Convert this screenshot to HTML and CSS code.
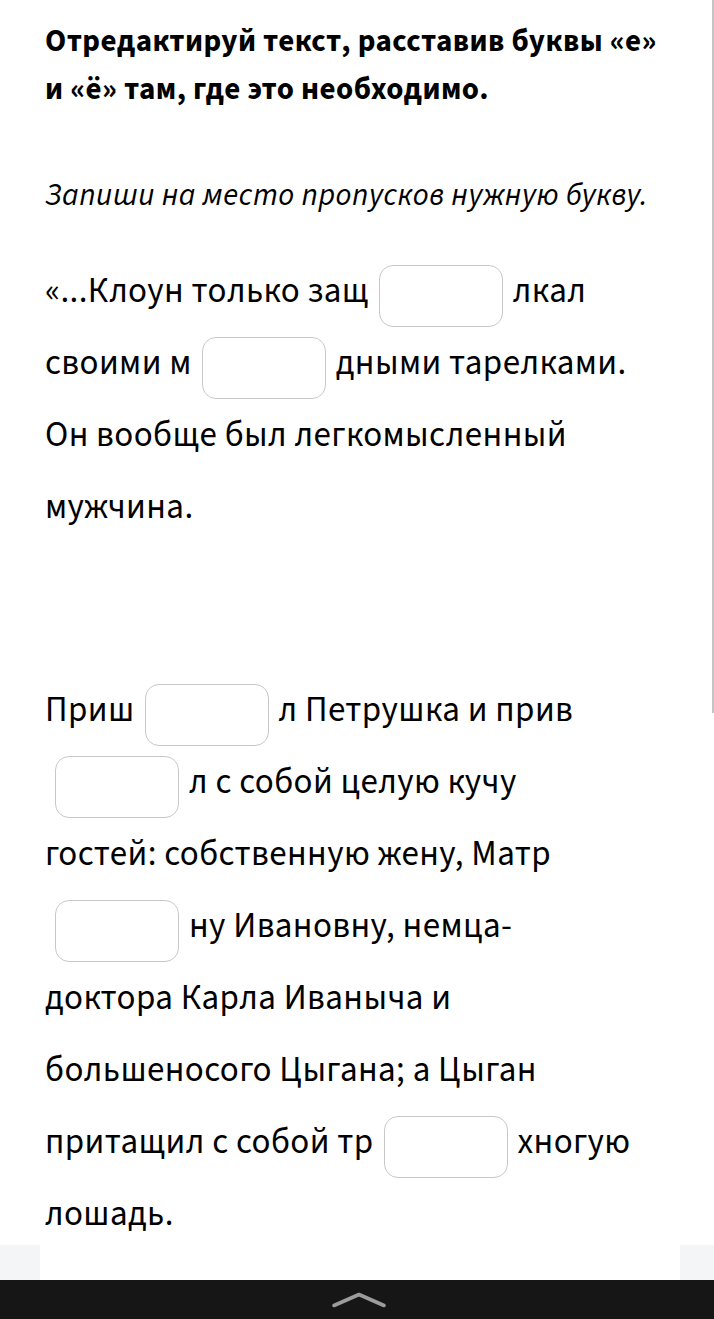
FILE: index.html
```html
<!DOCTYPE html>
<html lang="ru">
<head>
<meta charset="utf-8">
<title>Задание</title>
<link rel="stylesheet" href="styles.css">
</head>
<body>
<div class="page">
  <main class="content">
    <h1 class="task">Отредактируй текст, расставив буквы «е» и «ё» там, где это необходимо.</h1>
    <p class="hint">Запиши на место пропусков нужную букву.</p>
    <p class="para">«...Клоун только защ<span class="gap" role="textbox" aria-label="пропуск"></span>лкал своими м<span class="gap" role="textbox" aria-label="пропуск"></span>дными тарелками. Он вообще был легкомысленный мужчина.</p>
    <p class="para para-next">Приш<span class="gap" role="textbox" aria-label="пропуск"></span>л Петрушка и прив<span class="gap" role="textbox" aria-label="пропуск"></span>л с собой целую кучу гостей: собственную жену, Матр<span class="gap" role="textbox" aria-label="пропуск"></span>ну Ивановну, немца-доктора Карла Иваныча и большеносого Цыгана; а Цыган притащил с собой тр<span class="gap" role="textbox" aria-label="пропуск"></span>хногую лошадь.</p>
  </main>
  <div class="lower"><div class="card"></div></div>
  <nav class="bottombar">
    <svg class="chevron" width="56" height="16" viewBox="0 0 56 16" aria-hidden="true">
      <polyline points="3,13.5 28,2.5 53,13.5" fill="none" stroke="#9c9c9c" stroke-width="3.6" stroke-linecap="round" stroke-linejoin="round"/>
    </svg>
  </nav>
  <div class="scroll-thumb"></div>
</div>
</body>
</html>
```
FILE: styles.css
```css
html, body {
  margin: 0;
  padding: 0;
  background: #ffffff;
}

.page {
  height: 1319px;
  display: flex;
  flex-direction: column;
  overflow: hidden;
  color: #000;
  font-family: "Source Sans 3", "Source Sans Pro", Lato, sans-serif;
}

.content {
  flex: none;
  height: 1245px;
  box-sizing: border-box;
  padding: 17px 52px 0 45px;
  background: #fff;
}

.task {
  margin: 0;
  font-size: 31px;
  font-weight: 700;
  letter-spacing: 0.44px;
  line-height: 48px;
}

.hint {
  margin: 58px 0 0;
  font-size: 31px;
  font-style: italic;
  letter-spacing: 0.58px;
  line-height: 48px;
}

.para {
  max-width: 590px;
  margin: 36px 0 0;
  font-size: 35px;
  letter-spacing: 0.4px;
  line-height: 72px;
}

.para-next {
  margin-top: 131px;
}

.gap {
  display: inline-block;
  box-sizing: border-box;
  width: 124px;
  height: 62px;
  margin: 0 10px;
  border: 1.5px solid #c8c8c8;
  border-radius: 14px;
  background: #fff;
  vertical-align: -25px;
}

.lower {
  flex: 1;
  display: flex;
  padding: 0 34px 0 40px;
  background: #f4f5f7;
}

.card {
  flex: 1;
  background: #fff;
}

.bottombar {
  flex: none;
  height: 39px;
  display: flex;
  align-items: center;
  justify-content: center;
  background: #161616;
}

.chevron {
  display: block;
  margin-left: 4px;
}

.scroll-thumb {
  position: fixed;
  top: 0;
  right: 0;
  width: 2px;
  height: 713px;
  background: #c4c4c4;
}
```
